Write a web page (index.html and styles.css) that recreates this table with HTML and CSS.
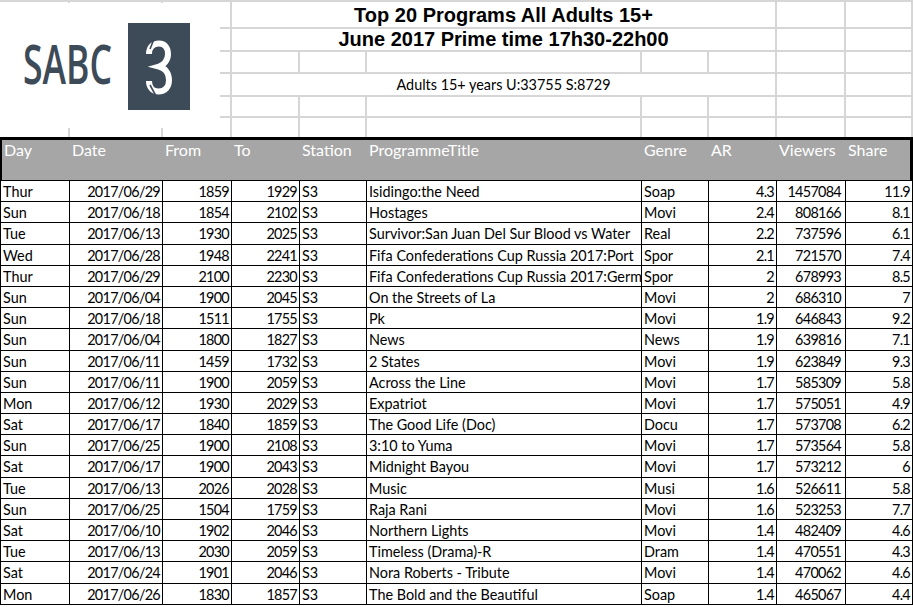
FILE: index.html
```html
<!DOCTYPE html>
<html>
<head>
<meta charset="utf-8">
<title>Top 20 Programs All Adults 15+</title>
<link rel="stylesheet" href="styles.css">
</head>
<body>
<div class="sheet">
  <div class="top">
    <div class="g"></div><div class="g"></div><div class="g"></div><div class="g span title">Top 20 Programs All Adults 15+</div><div class="g"></div><div class="g"></div>
    <div class="g"></div><div class="g"></div><div class="g"></div><div class="g span title t2">June 2017 Prime time 17h30-22h00</div><div class="g"></div><div class="g"></div>
    <div class="g"></div><div class="g"></div><div class="g"></div><div class="g"></div><div class="g"></div><div class="g"></div><div class="g"></div><div class="g"></div><div class="g"></div><div class="g"></div>
    <div class="g"></div><div class="g"></div><div class="g"></div><div class="g span sub">Adults 15+ years U:33755 S:8729</div><div class="g"></div><div class="g"></div>
    <div class="g"></div><div class="g"></div><div class="g"></div><div class="g"></div><div class="g"></div><div class="g"></div><div class="g"></div><div class="g"></div><div class="g"></div><div class="g"></div>
    <div class="g last"></div><div class="g last"></div><div class="g last"></div><div class="g last"></div><div class="g last"></div><div class="g last"></div><div class="g last"></div><div class="g last"></div><div class="g last"></div><div class="g last"></div>
    <div class="logo">
      <svg width="220" height="125" viewBox="0 0 220 125">
        <text x="23" y="81" class="sabc" textLength="89" lengthAdjust="spacingAndGlyphs">SABC</text>
        <rect x="128" y="20" width="62" height="87" fill="#3d4a58"/>
        <g transform="translate(128,20)">
          <path d="M21,31 C21,24 25,20.5 31,20.5 C37,20.5 40,25 40,31 C40,37 36,42 31,43.5 C37,45 41,50 41,57 C41,64 37,68.5 30.5,68.5 C24.5,68.5 21,64 21,58" fill="none" stroke="#fff" stroke-width="6"/>
          <path d="M26,16 L22,26" stroke="#3d4a58" stroke-width="1.6"/>
          <path d="M22,62 L28,73" stroke="#3d4a58" stroke-width="1.6"/>
        </g>
      </svg>
    </div>
  </div>

  <div class="hdr">
    <span>Day</span><span>Date</span><span>From</span><span>To</span><span>Station</span><span>ProgrammeTitle</span><span>Genre</span><span>AR</span><span>Viewers</span><span>Share</span>
  </div>

  <div class="data">
    <div class="row"><span>Thur</span><span class="n">2017/06/29</span><span class="n">1859</span><span class="n">1929</span><span>S3</span><span>Isidingo:the Need</span><span>Soap</span><span class="n">4.3</span><span class="n v">1457084</span><span class="n">11.9</span></div>
    <div class="row"><span>Sun</span><span class="n">2017/06/18</span><span class="n">1854</span><span class="n">2102</span><span>S3</span><span>Hostages</span><span>Movi</span><span class="n">2.4</span><span class="n v">808166</span><span class="n">8.1</span></div>
    <div class="row"><span>Tue</span><span class="n">2017/06/13</span><span class="n">1930</span><span class="n">2025</span><span>S3</span><span>Survivor:San Juan Del Sur Blood vs Water</span><span>Real</span><span class="n">2.2</span><span class="n v">737596</span><span class="n">6.1</span></div>
    <div class="row"><span>Wed</span><span class="n">2017/06/28</span><span class="n">1948</span><span class="n">2241</span><span>S3</span><span>Fifa Confederations Cup Russia 2017:Port</span><span>Spor</span><span class="n">2.1</span><span class="n v">721570</span><span class="n">7.4</span></div>
    <div class="row"><span>Thur</span><span class="n">2017/06/29</span><span class="n">2100</span><span class="n">2230</span><span>S3</span><span>Fifa Confederations Cup Russia 2017:Germ</span><span>Spor</span><span class="n">2</span><span class="n v">678993</span><span class="n">8.5</span></div>
    <div class="row"><span>Sun</span><span class="n">2017/06/04</span><span class="n">1900</span><span class="n">2045</span><span>S3</span><span>On the Streets of La</span><span>Movi</span><span class="n">2</span><span class="n v">686310</span><span class="n">7</span></div>
    <div class="row"><span>Sun</span><span class="n">2017/06/18</span><span class="n">1511</span><span class="n">1755</span><span>S3</span><span>Pk</span><span>Movi</span><span class="n">1.9</span><span class="n v">646843</span><span class="n">9.2</span></div>
    <div class="row"><span>Sun</span><span class="n">2017/06/04</span><span class="n">1800</span><span class="n">1827</span><span>S3</span><span>News</span><span>News</span><span class="n">1.9</span><span class="n v">639816</span><span class="n">7.1</span></div>
    <div class="row"><span>Sun</span><span class="n">2017/06/11</span><span class="n">1459</span><span class="n">1732</span><span>S3</span><span>2 States</span><span>Movi</span><span class="n">1.9</span><span class="n v">623849</span><span class="n">9.3</span></div>
    <div class="row"><span>Sun</span><span class="n">2017/06/11</span><span class="n">1900</span><span class="n">2059</span><span>S3</span><span>Across the Line</span><span>Movi</span><span class="n">1.7</span><span class="n v">585309</span><span class="n">5.8</span></div>
    <div class="row"><span>Mon</span><span class="n">2017/06/12</span><span class="n">1930</span><span class="n">2029</span><span>S3</span><span>Expatriot</span><span>Movi</span><span class="n">1.7</span><span class="n v">575051</span><span class="n">4.9</span></div>
    <div class="row"><span>Sat</span><span class="n">2017/06/17</span><span class="n">1840</span><span class="n">1859</span><span>S3</span><span>The Good Life (Doc)</span><span>Docu</span><span class="n">1.7</span><span class="n v">573708</span><span class="n">6.2</span></div>
    <div class="row"><span>Sun</span><span class="n">2017/06/25</span><span class="n">1900</span><span class="n">2108</span><span>S3</span><span>3:10 to Yuma</span><span>Movi</span><span class="n">1.7</span><span class="n v">573564</span><span class="n">5.8</span></div>
    <div class="row"><span>Sat</span><span class="n">2017/06/17</span><span class="n">1900</span><span class="n">2043</span><span>S3</span><span>Midnight Bayou</span><span>Movi</span><span class="n">1.7</span><span class="n v">573212</span><span class="n">6</span></div>
    <div class="row"><span>Tue</span><span class="n">2017/06/13</span><span class="n">2026</span><span class="n">2028</span><span>S3</span><span>Music</span><span>Musi</span><span class="n">1.6</span><span class="n v">526611</span><span class="n">5.8</span></div>
    <div class="row"><span>Sun</span><span class="n">2017/06/25</span><span class="n">1504</span><span class="n">1759</span><span>S3</span><span>Raja Rani</span><span>Movi</span><span class="n">1.6</span><span class="n v">523253</span><span class="n">7.7</span></div>
    <div class="row"><span>Sat</span><span class="n">2017/06/10</span><span class="n">1902</span><span class="n">2046</span><span>S3</span><span>Northern Lights</span><span>Movi</span><span class="n">1.4</span><span class="n v">482409</span><span class="n">4.6</span></div>
    <div class="row"><span>Tue</span><span class="n">2017/06/13</span><span class="n">2030</span><span class="n">2059</span><span>S3</span><span>Timeless (Drama)-R</span><span>Dram</span><span class="n">1.4</span><span class="n v">470551</span><span class="n">4.3</span></div>
    <div class="row"><span>Sat</span><span class="n">2017/06/24</span><span class="n">1901</span><span class="n">2046</span><span>S3</span><span>Nora Roberts - Tribute</span><span>Movi</span><span class="n">1.4</span><span class="n v">470062</span><span class="n">4.6</span></div>
    <div class="row"><span>Mon</span><span class="n">2017/06/26</span><span class="n">1830</span><span class="n">1857</span><span>S3</span><span>The Bold and the Beautiful</span><span>Soap</span><span class="n">1.4</span><span class="n v">465067</span><span class="n">4.4</span></div>
  </div>
</div>
</body>
</html>
```

FILE: styles.css
```css
* { box-sizing: border-box; }

body {
  margin: 0;
  background: #ffffff;
  font-family: Lato, "Liberation Sans", sans-serif;
  font-size: 14.4px;
  color: #000;
}

.sheet {
  width: 913px;
  overflow: hidden;
}

/* ---------- top (title) area ---------- */
.top {
  position: relative;
  display: grid;
  grid-template-columns: 70px 93px 69px 68px 67px 275px 67px 68px 69px 67px;
  grid-template-rows: 27px 23px 22px 23px 21px 19px;
  border-top: 2px solid #d6d6d6;
}

.g {
  border-right: 2px solid #d6d6d6;
  border-bottom: 2px solid #d6d6d6;
}

.g.last {
  border-bottom: none;
}

.span {
  grid-column: span 5;
  text-align: center;
  white-space: nowrap;
}

.title {
  font-family: "Liberation Sans", Arial, sans-serif;
  font-weight: bold;
  font-size: 20px;
  line-height: 24px;
  padding-top: 1px;
}

.title.t2 {
  line-height: 21px;
  padding-top: 0;
}

.sub {
  padding-top: 2px;
  line-height: 18px;
}

.logo {
  position: absolute;
  left: 0;
  top: 1px;
  width: 220px;
  height: 125px;
  background: #ffffff;
}

.logo svg {
  display: block;
}

.sabc {
  font-family: "Open Sans", sans-serif;
  font-weight: 600;
  font-size: 55px;
  fill: #3d4a58;
}

/* ---------- header row ---------- */
.hdr {
  display: grid;
  grid-template-columns: 68px 93px 69px 68px 67px 275px 67px 68px 69px 1fr;
  height: 44px;
  background: #a6a6a6;
  border-top: 3px solid #000;
  border-bottom: 1px solid #000;
  border-left: 2px solid #000;
  border-right: 3px solid #000;
  color: #ffffff;
  font-size: 16px;
}

.hdr span {
  padding: 1px 2px 0;
  line-height: 18px;
  white-space: nowrap;
}

/* ---------- data rows ---------- */
.data {
  width: 913px;
  border-left: 1px solid #000;
}

.row {
  display: grid;
  grid-template-columns: 69px 93px 69px 68px 67px 275px 67px 68px 69px 67px;
  height: 21.2px;
}

.row span {
  border-right: 1px solid #000;
  border-bottom: 1px solid #000;
  padding: 2px 2px 0;
  line-height: 17px;
  white-space: nowrap;
  overflow: hidden;
}

.row .n {
  text-align: right;
  letter-spacing: -0.7px;
}

.row .v {
  padding-right: 4px;
}
```
